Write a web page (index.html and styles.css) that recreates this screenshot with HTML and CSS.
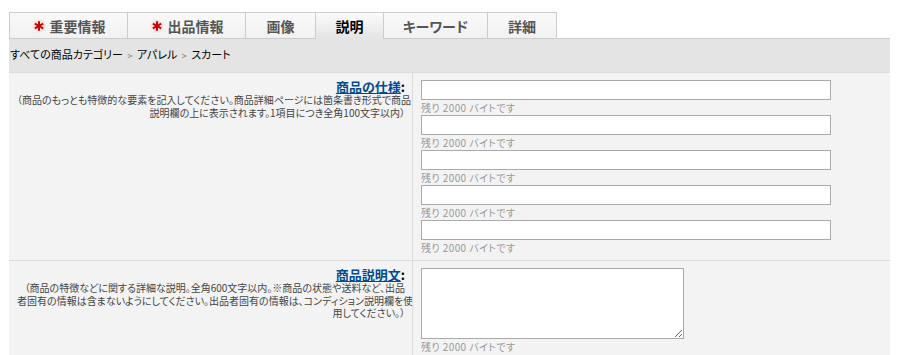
FILE: index.html
```html
<!DOCTYPE html>
<html lang="ja">
<head>
    <meta charset="UTF-8">
    <title>商品の説明</title>
    <link rel="stylesheet" href="styles.css">
</head>
<body>
    <div class="page">
        <!-- Tabs -->
        <div class="tabs">
            <div class="tab tab-wide">
                <svg class="req-icon" width="14" height="14" viewBox="0 0 14 14">
                    <circle cx="7" cy="7" r="6.5" fill="#f5e4e4"/>
                    <path d="M7 3.2V10.8M3.7 5.1L10.3 8.9M3.7 8.9L10.3 5.1" stroke="#c00" stroke-width="2" stroke-linecap="square"/>
                </svg>
                重要情報
            </div>
            <div class="tab tab-wide">
                <svg class="req-icon" width="14" height="14" viewBox="0 0 14 14">
                    <circle cx="7" cy="7" r="6.5" fill="#f5e4e4"/>
                    <path d="M7 3.2V10.8M3.7 5.1L10.3 8.9M3.7 8.9L10.3 5.1" stroke="#c00" stroke-width="2" stroke-linecap="square"/>
                </svg>
                出品情報
            </div>
            <div class="tab tab-img">画像</div>
            <div class="tab tab-active">説明</div>
            <div class="tab tab-kw">キーワード</div>
            <div class="tab tab-detail">詳細</div>
        </div>

        <!-- Breadcrumb -->
        <div class="breadcrumb">
            すべての商品カテゴリー <span class="sep">&gt;</span> アパレル <span class="sep">&gt;</span> スカート
        </div>

        <!-- Form rows -->
        <div class="form-row">
            <div class="label-cell">
                <div class="label"><a href="#">商品の仕様</a>:</div>
                <div class="hint">（商品のもっとも特徴的な要素を記入してください。商品詳細ページには箇条書き形式で商品<br>説明欄の上に表示されます。1項目につき全角100文字以内）</div>
            </div>
            <div class="field-cell">
                <input type="text" class="text-input">
                <div class="counter">残り 2000 バイトです</div>
                <input type="text" class="text-input">
                <div class="counter">残り 2000 バイトです</div>
                <input type="text" class="text-input">
                <div class="counter">残り 2000 バイトです</div>
                <input type="text" class="text-input">
                <div class="counter">残り 2000 バイトです</div>
                <input type="text" class="text-input">
                <div class="counter">残り 2000 バイトです</div>
            </div>
        </div>

        <div class="form-row">
            <div class="label-cell">
                <div class="label"><a href="#">商品説明文</a>:</div>
                <div class="hint">（商品の特徴などに関する詳細な説明。全角600文字以内。※商品の状態や送料など、出品<br>者固有の情報は含まないようにしてください。出品者固有の情報は、コンディション説明欄を使<br>用してください。）</div>
            </div>
            <div class="field-cell">
                <textarea class="text-area"></textarea>
                <div class="counter">残り 2000 バイトです</div>
            </div>
        </div>
    </div>
</body>
</html>
```

FILE: styles.css
```css
* {
    margin: 0;
    padding: 0;
    box-sizing: border-box;
}

body {
    background: #ffffff;
    font-family: "Noto Sans CJK JP", "DejaVu Sans", sans-serif;
    font-feature-settings: "palt";
    color: #000;
    padding: 12px 0 0 9px;
}

.page {
    width: 881px;
}

/* Tabs */
.tabs {
    display: flex;
    height: 26px;
}

.tab {
    display: flex;
    align-items: center;
    justify-content: center;
    gap: 4px;
    height: 26px;
    border: 1px solid #cccccc;
    border-bottom: none;
    margin-right: -1px;
    background: linear-gradient(#fafafa, #f1f1f1);
    font-size: 14px;
    font-weight: bold;
    color: #555555;
    line-height: 1;
}

.tab-wide { width: 119px; }
.tab-img { width: 71px; }
.tab-kw { width: 105px; }
.tab-detail { width: 70px; }

.tab-active {
    width: 69px;
    height: 27px;
    color: #000000;
    background: linear-gradient(#fbfbfb, #e4e4e4);
    position: relative;
    z-index: 1;
}

.req-icon {
    display: block;
    flex-shrink: 0;
}

/* Breadcrumb */
.breadcrumb {
    background: #e4e4e4;
    border-top: 1px solid #cccccc;
    height: 34px;
    padding: 8px 0 0 1px;
    font-size: 11px;
    line-height: 14px;
    color: #000;
}

.breadcrumb .sep {
    color: #777777;
    font-size: 9px;
    padding: 0 2px;
}

/* Form rows */
.form-row {
    display: grid;
    grid-template-columns: 403px 1fr;
    background: #f3f3f3;
    border-top: 1px solid #dcdcdc;
}

.label-cell {
    padding: 6px 7px 8px 8px;
    text-align: right;
}

.label {
    font-size: 13px;
    font-weight: bold;
    line-height: 15px;
}

.label a {
    color: #004b91;
}

.hint {
    font-size: 10px;
    line-height: 12.5px;
    color: #444444;
    white-space: nowrap;
}

.field-cell {
    border-left: 1px solid #dcdcdc;
    padding: 7px 0 5px 8px;
}

.text-input {
    display: block;
    width: 410px;
    height: 20px;
    border: 1px solid #aaaaaa;
    background: #ffffff;
}

.text-area {
    display: block;
    width: 263px;
    height: 71px;
    border: 1px solid #aaaaaa;
    background: #ffffff;
    resize: both;
}

.counter {
    font-size: 10px;
    line-height: 15px;
    color: #999999;
    letter-spacing: 0.4px;
}
```
